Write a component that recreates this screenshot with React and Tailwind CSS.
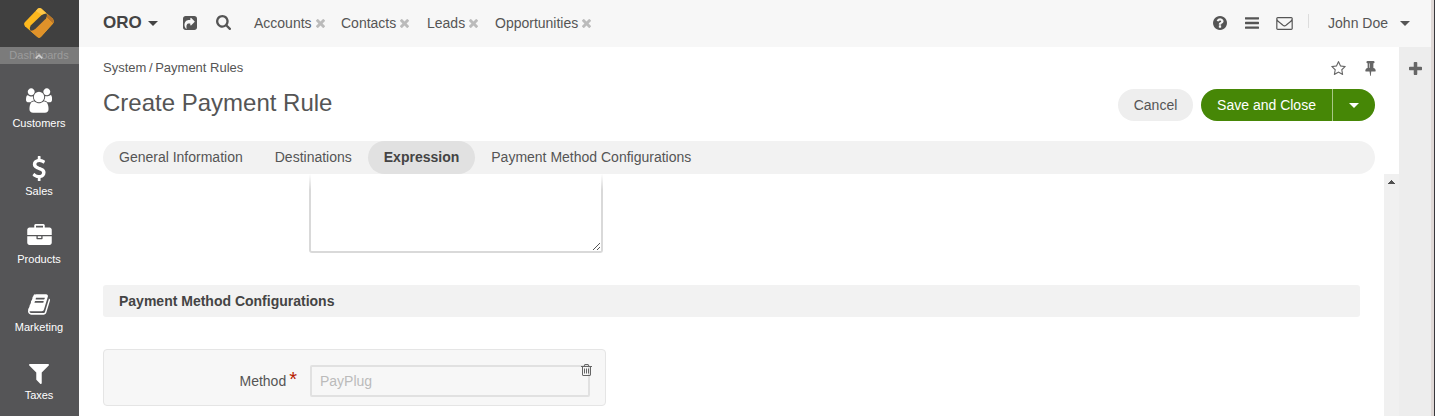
const ICONS = {
  share: ['0 128 1536 1536', 'M1280 749q0-26-19-45l-352-352q-30-31-69-14-40 17-40 59v160q-119 0-216 19.500t-162.500 51-114 79-76.500 95.500-44.500 109-21.500 111.500-5 110.500q0 181 167 404 11 12 25 12 7 0 13-3 22-9 19-33-44-354 62-473 46-52 130-75.500t224-23.500v160q0 42 40 59 12 5 24 5 26 0 45-19l352-352q19-19 19-45zm256-333v960q0 119-84.500 203.500t-203.500 84.500h-960q-119 0-203.500-84.500t-84.500-203.500v-960q0-119 84.500-203.500t203.500-84.500h960q119 0 203.500 84.500t84.500 203.500z'],
  search: ['0 0 1664 1664', 'M1152 704q0-185-131.500-316.500t-316.500-131.500-316.500 131.500-131.500 316.500 131.500 316.500 316.500 131.500 316.500-131.500 131.500-316.500zm512 832q0 52-38 90t-90 38q-54 0-90-38l-343-342q-179 124-399 124-143 0-273.500-55.500t-225-150-150-225-55.500-273.500 55.500-273.500 150-225 225-150 273.500-55.500 273.500 55.500 225 150 150 225 55.500 273.500q0 220-124 399l343 343q37 37 37 90z'],
  times: ['302 366 1188 1188', 'M1490 1322q0 40-28 68l-136 136q-28 28-68 28t-68-28l-294-294-294 294q-28 28-68 28t-68-28l-136-136q-28-28-28-68t28-68l294-294-294-294q-28-28-28-68t28-68l136-136q28-28 68-28t68 28l294 294 294-294q28-28 68-28t68 28l136 136q28 28 28 68t-28 68l-294 294 294 294q28 28 28 68z'],
  question: ['128 128 1536 1536', 'M1024 1376v-192q0-14-9-23t-23-9h-192q-14 0-23 9t-9 23v192q0 14 9 23t23 9h192q14 0 23-9t9-23zm256-672q0-88-55.500-163t-138.500-116-170-41q-243 0-371 213-15 24 8 42l132 100q7 6 19 6 16 0 25-12 53-68 86-92 34-24 86-24 48 0 85.500 26t37.500 59q0 38-20 61t-68 45q-63 28-115.500 86.500t-52.500 125.500v36q0 14 9 23t23 9h192q14 0 23-9t9-23q0-19 21.500-49.500t54.500-49.500q32-18 49-28.500t46-35 44.500-48 28-60.500 12.500-81zm384 192q0 209-103 385.500t-279.500 279.500-385.500 103-385.500-103-279.500-279.500-103-385.500 103-385.500 279.500-279.500 385.500-103 385.500 103 279.500 279.500 103 385.500z'],
  bars: ['128 256 1536 1280', 'M1664 1344v128q0 26-19 45t-45 19h-1408q-26 0-45-19t-19-45v-128q0-26 19-45t45-19h1408q26 0 45 19t19 45zm0-512v128q0 26-19 45t-45 19h-1408q-26 0-45-19t-19-45v-128q0-26 19-45t45-19h1408q26 0 45 19t19 45zm0-512v128q0 26-19 45t-45 19h-1408q-26 0-45-19t-19-45v-128q0-26 19-45t45-19h1408q26 0 45 19t19 45z'],
  envelope: ['0 256 1792 1408', 'M1664 1504v-768q-32 36-69 66-268 206-426 338-51 43-83 67t-86.500 48.500-102.500 24.500h-2q-48 0-102.500-24.500t-86.500-48.500-83-67q-158-132-426-338-37-30-69-66v768q0 13 9.500 22.500t22.500 9.500h1472q13 0 22.500-9.500t9.500-22.500zm0-1051v-24.500l-.5-13-3-12.500-5.500-9-9-7.500-14-2.500h-1472q-13 0-22.500 9.500t-9.500 22.500q0 168 147 284 193 152 401 317 6 5 35 29.500t46 37.500 44.500 31.500 50.500 27.500 43 9h2q20 0 43-9t50.500-27.500 44.500-31.500 46-37.500 35-29.500q208-165 401-317 54-43 100.500-115.500t46.500-131.500zm128-37v1088q0 66-47 113t-113 47h-1472q-66 0-113-47t-47-113v-1088q0-66 47-113t113-47h1472q66 0 113 47t47 113z'],
  star: ['64 32 1664 1587', 'M1201 1004l306-297-422-62-189-382-189 382-422 62 306 297-73 421 378-199 377 199zm527-357q0 22-26 48l-363 354 86 500q1 7 1 20 0 50-41 50-19 0-40-12l-449-236-449 236q-22 12-40 12-21 0-31.500-14.500t-10.500-35.500q0-6 2-20l86-500-364-354q-25-27-25-48 0-37 56-46l502-73 225-455q19-41 49-41t49 41l225 455 502 73q56 9 56 46z'],
  pin: ['320 128 1152 1664', 'M800 864v-448q0-14-9-23t-23-9-23 9-9 23v448q0 14 9 23t23 9 23-9 9-23zm672 352q0 26-19 45t-45 19h-429l-51 483q-2 12-10.500 20.500t-20.500 8.500h-1q-27 0-32-27l-76-485h-404q-26 0-45-19t-19-45q0-123 78.500-221.500t177.500-98.500v-512q-52 0-90-38t-38-90 38-90 90-38h640q52 0 90 38t38 90-38 90-90 38v512q99 0 177.500 98.500t78.500 221.500z'],
  plus: ['192 128 1408 1408', 'M1600 736v192q0 40-28 68t-68 28h-416v416q0 40-28 68t-68 28h-192q-40 0-68-28t-28-68v-416h-416q-40 0-68-28t-28-68v-192q0-40 28-68t68-28h416v-416q0-40 28-68t68-28h192q40 0 68 28t28 68v416h416q40 0 68 28t28 68z'],
  users: ['64 0 1920 1792', 'M657 896q-162 5-265 128h-134q-82 0-138-40.500t-56-118.500q0-353 124-353 6 0 43.500 21t97.500 42.500 119 21.500q67 0 133-23-5 37-5 66 0 159 93 269zm1071 637q0 120-73 189.500t-194 69.500h-874q-121 0-194-69.500t-73-189.500q0-53 3.500-103.500t14-109 26.500-108.500 43-97.500 62-81 85.500-53.500 111.500-20q10 0 43 21.500t73 48 107 48 135 21.500 135-21.500 107-48 73-48 43-21.500q61 0 111.500 20t85.500 53.500 62 81 43 97.500 26.500 108.500 14 109 3.500 103.500zm-1024-1277q0 106-75 181t-181 75-181-75-75-181 75-181 181-75 181 75 75 181zm704 384q0 159-112.500 271.500t-271.500 112.500-271.500-112.500-112.500-271.500 112.500-271.500 271.500-112.500 271.500 112.500 112.500 271.500zm576 225q0 78-56 118.500t-138 40.500h-134q-103-123-265-128 93-110 93-269 0-29-5-66 66 23 133 23 59 0 119-21.500t97.500-42.500 43.500-21q124 0 124 353zm-128-609q0 106-75 181t-181 75-181-75-75-181 75-181 181-75 181 75 75 181z'],
  dollar: ['424 0 938 1792', 'M1362 1185q0 153-99.500 263.500t-258.500 136.500v175q0 14-9 23t-23 9h-135q-13 0-22.500-9.500t-9.500-22.500v-175q-66-9-127.500-31t-101.500-44.500-74-48-46.500-37.500-17.500-18q-17-21-2-41l103-135q7-10 23-12 15-2 24 9l2 2q113 99 243 125 37 8 74 8 81 0 142.500-43t61.500-122q0-28-15-53t-33.500-42-58.500-37.500-66-32-80-32.500q-39-16-61.500-25t-61.500-26.500-62.500-31-56.500-35.500-53.500-42.500-43.500-49-35.500-58-21-66.500-8.500-78q0-138 98-242t255-134v-180q0-13 9.500-22.500t22.500-9.500h135q14 0 23 9t9 23v176q57 6 110.500 23t87 33.500 63.500 37.500 39 29 15 14q17 18 5 38l-81 146q-8 15-23 16-14 3-27-7-3-3-14.500-12t-39-26.500-58.500-32-74.500-26-85.500-11.500q-95 0-155 43t-60 111q0 26 8.500 48t29.500 41.500 39.500 33 56 31 60.500 27 70 27.500q53 20 81 31.500t76 35 75.500 42.500 62 50 53 63.500 31.500 76.500 13 94z'],
  briefcase: ['0 0 1792 1536', 'M640 256h512v-128h-512v128zm1152 640v480q0 66-47 113t-113 47h-1472q-66 0-113-47t-47-113v-480h672v160q0 26 19 45t45 19h320q26 0 45-19t19-45v-160h672zm-768 0v128h-256v-128h256zm768-480v384h-1792v-384q0-66 47-113t113-47h352v-160q0-40 28-68t68-28h576q40 0 68 28t28 68v160h352q66 0 113 47t47 113z'],
  book: ['64 128 1664 1536', 'M1703 478q40 57 18 129l-275 906q-19 64-76.500 107.500t-122.500 43.500h-923q-77 0-148.500-53.500t-99.500-131.500q-24-67-2-127 0-4 3-27t4-37q1-8-3-21.500t-3-19.500q2-11 8-21t16.500-23.500 16.500-23.500q23-38 45-91.500t30-91.500q3-10 .5-30t-.5-28q3-11 17-28t17-23q21-36 42-92t25-90q1-9-2.500-32t.5-28q4-13 22-30.500t22-22.500q19-26 42.500-84.500t27.500-96.500q1-8-3-25.500t-2-26.500q2-8 9-18t18-23 17-21q8-12 16.500-30.500t15-35 16-36 19.500-32 26.500-23.500 36-11.500 47.500 5.500l-1 3q38-9 51-9h761q74 0 114 56t18 130l-274 906q-36 119-71.500 153.500t-128.500 34.500h-869q-27 0-38 15-11 16-1 43 24 70 144 70h923q29 0 56-15.500t35-41.500l300-987q7-22 5-57 38 15 59 43zm-1064 2q-4 13 2 22.500t20 9.500h608q13 0 25.500-9.500t16.500-22.500l21-64q4-13-2-22.500t-20-9.500h-608q-13 0-25.500 9.500t-16.500 22.500zm-83 256q-4 13 2 22.500t20 9.500h608q13 0 25.500-9.500t16.500-22.500l21-64q4-13-2-22.500t-20-9.500h-608q-13 0-25.500 9.500t-16.500 22.500z'],
  filter: ['192 256 1408 1408', 'M1595 295q17 41-14 70l-493 493v742q0 42-39 59-13 5-25 5-27 0-45-19l-256-256q-19-19-19-45v-486l-493-493q-31-29-14-70 17-39 59-39h1280q42 0 59 39z'],
  trash: ['192 128 1408 1536', 'M704 736v576q0 14-9 23t-23 9h-64q-14 0-23-9t-9-23v-576q0-14 9-23t23-9h64q14 0 23 9t9 23zm256 0v576q0 14-9 23t-23 9h-64q-14 0-23-9t-9-23v-576q0-14 9-23t23-9h64q14 0 23 9t9 23zm256 0v576q0 14-9 23t-23 9h-64q-14 0-23-9t-9-23v-576q0-14 9-23t23-9h64q14 0 23 9t9 23zm128 724v-948h-896v948q0 22 7 40.500t14.500 27 10.500 8.500h832q3 0 10.500-8.500t14.500-27 7-40.500zm-672-1076h448l-48-117q-7-9-17-11h-317q-10 2-17 11zm928 32v64q0 14-9 23t-23 9h-96v948q0 83-47 143.500t-113 60.500h-832q-66 0-113-58.500t-47-141.500v-952h-96q-14 0-23-9t-9-23v-64q0-14 9-23t23-9h309l70-167q15-37 54-63t79-26h320q40 0 79 26t54 63l70 167h309q14 0 23 9t9 23z'],
  caret: ['0 0 10 5', 'M0 0h10l-5 5z'],
};

function Icon({ name, className }) {
  const [viewBox, d] = ICONS[name];
  return (
    <svg viewBox={viewBox} className={`block shrink-0 fill-current ${className}`} aria-hidden="true">
      <path d={d} />
    </svg>
  );
}

function Logo() {
  return (
    <svg viewBox="0 0 30 30" className="block h-[30px] w-[30px]" aria-hidden="true">
      <path d="M14 .6q1.600-1.200 3.200 0L28.600 10.600q2.200 2.600.4 5L16.800 29q-1.700 1.300-3.400 0L1 18.200q-1.700-2-.2-4z" fill="#fdb81e" />
      <path d="M14 .6q1.600-1.200 3.200 0l5.400 4.900-4.800 1.300-6-3.700z" fill="#fec748" />
      <path d="M22.600 5.500l6 5.100q2.200 2.600.4 5l-6.300-5.800z" fill="#b8742a" />
      <path d="M22.700 9.800L29 15.600 16.800 29q-1.700 1.300-3.400 0L6 22.400z" fill="#e0922a" />
      <path d="M17.400 7.200q2.600-1.700 5.200-1.700 1 3-.6 5L11.500 20.800Q9 22.900 6.300 22.600q-1.300-2.600.4-5z" fill="#404040" />
    </svg>
  );
}

const MENU = [
  { label: 'Customers', icon: 'users', size: 'h-[25px] w-[26px] -mb-px' },
  { label: 'Sales', icon: 'dollar', size: 'h-[25px] w-[14px] -mb-px' },
  { label: 'Products', icon: 'briefcase', size: 'h-[21px] w-[25px] mb-[3px]' },
  { label: 'Marketing', icon: 'book', size: 'h-[21px] w-[22px] mb-px' },
  { label: 'Taxes', icon: 'filter', size: 'h-5 w-5' },
];

function Sidebar() {
  return (
    <aside className="flex w-[79px] shrink-0 flex-col bg-[#555557] text-white">
      <div className="flex h-[47px] shrink-0 justify-center bg-[#404040] pr-px pt-2">
        <Logo />
      </div>
      <div className="relative h-[17px] shrink-0 bg-[#7b7b7b] pr-px text-center text-[11px] leading-[17px] text-[#9c9c9c]">
        Dashboards
        <svg viewBox="0 0 8 5" className="absolute left-[35px] top-[7px] h-[5px] w-2" aria-hidden="true">
          <path d="M.7 4.400L4 1.100l3.300 3.300" fill="none" stroke="#d0d0d0" strokeWidth="1.500" />
        </svg>
      </div>
      <nav className="flex flex-col pr-px">
        {MENU.map((item) => (
          <a key={item.label} className="flex h-[68px] flex-col items-center">
            <span className="flex h-12 items-end">
              <Icon name={item.icon} className={item.size} />
            </span>
            <span className="mt-[3px] text-[11px] leading-4">{item.label}</span>
          </a>
        ))}
      </nav>
    </aside>
  );
}

const SHORTCUTS = [
  { name: 'Accounts', width: 'w-[87px]' },
  { name: 'Contacts', width: 'w-[86px]' },
  { name: 'Leads', width: 'w-[68px]' },
  { name: 'Opportunities', width: 'w-[97px]' },
];

function TopBar() {
  return (
    <header className="flex h-[47px] shrink-0 items-center bg-[#f7f7f7] pl-6 pr-[21px] text-sm text-[#555]">
      <span className="w-[39px] text-[17px] font-bold leading-5 text-[#444] -mt-[2px]">ORO</span>
      <Icon name="caret" className="ml-[6px] h-[5px] w-[10px] text-[#444]" />
      <Icon name="share" className="ml-[25px] -mt-[2px] h-[14px] w-[14px]" />
      <Icon name="search" className="ml-[19px] -mt-[2px] h-[15px] w-[15px]" />
      <div className="-mt-[2px] ml-[23px] flex">
        {SHORTCUTS.map(({ name, width }) => (
          <span key={name} className={`flex items-center text-[14px] leading-5 ${width}`}>
            {name}
            <Icon name="times" className="ml-1 mt-px h-[9px] w-[9px] text-[#bbb]" />
          </span>
        ))}
      </div>
      <Icon name="question" className="ml-auto -mt-px h-[14px] w-[14px]" />
      <Icon name="bars" className="ml-[18px] -mt-px h-[12px] w-[14px]" />
      <Icon name="envelope" className="ml-[17px] -mt-px h-[13px] w-[17px]" />
      <span className="ml-[15px] -mt-[5px] h-[14px] w-px bg-[#ddd]" />
      <span className="-mt-[2px] ml-[19px]">John Doe</span>
      <Icon name="caret" className="ml-[12px] h-[5px] w-[10px]" />
    </header>
  );
}

function PageHeader() {
  return (
    <div className="flex h-[94px] shrink-0 justify-between pl-6 pr-6">
      <div>
        <div className="mt-3 text-[13px] leading-[18px] text-[#555]">System&thinsp;/&thinsp;Payment Rules</div>
        <h1 className="mt-3 text-2xl leading-[28px] text-[#555]">Create Payment Rule</h1>
      </div>
      <div className="flex flex-col items-end text-[#666]">
        <div className="flex h-[42px] items-center">
          <Icon name="star" className="h-[14px] w-[15px]" />
          <Icon name="pin" className="ml-[19px] mr-[-1px] h-[15px] w-[11px]" />
        </div>
        <div className="flex h-8 gap-2 text-sm">
          <button className="w-[75px] rounded-full bg-[#eee] text-[#555]">Cancel</button>
          <div className="flex rounded-full bg-[#468706] text-white">
            <button className="w-[131px]">Save and Close</button>
            <button className="flex w-[43px] items-center justify-center border-l border-[#a9c888]">
              <Icon name="caret" className="h-[5px] w-[10px]" />
            </button>
          </div>
        </div>
      </div>
    </div>
  );
}

function Tabs() {
  return (
    <nav className="mx-6 flex h-[33px] shrink-0 rounded-full bg-[#f2f2f2] text-sm leading-8 text-[#555]">
      <span className="px-4">General Information</span>
      <span className="px-4">Destinations</span>
      <span className="rounded-full bg-[#e1e1e1] px-4 font-bold text-[#444]">Expression</span>
      <span className="px-4">Payment Method Configurations</span>
    </nav>
  );
}

function FormBody() {
  return (
    <div className="flex min-h-0 grow">
      <div className="grow overflow-hidden pl-6 pr-6">
        <div className="relative ml-[206px] h-[79px] w-[294px] rounded-b-[3px] border-2 border-t-0 border-[#d9d9d9]">
          <div className="absolute -inset-x-[2px] top-0 h-4 bg-linear-to-b from-white to-white/0" />
          <svg viewBox="0 0 8 8" className="absolute bottom-px right-0 h-2 w-2" shapeRendering="crispEdges" aria-hidden="true">
            <path d="M0 7h1v1H0zM1 6h1v1H1zM2 5h1v1H2zM3 4h1v1H3zM4 3h1v1H4zM5 2h1v1H5zM6 1h1v1H6zM4 7h1v1H4zM5 6h1v1H5zM6 5h1v1H6z" fill="#555" />
          </svg>
        </div>
        <h2 className="mt-8 h-8 rounded-[3px] bg-[#f2f2f2] px-4 text-sm font-bold leading-8 text-[#444]">
          Payment Method Configurations
        </h2>
        <div className="mt-8 flex h-[57px] w-[503px] rounded-[4px] border border-[#e5e5e5] bg-[#f7f7f7] pt-[15px] text-sm text-[#555]">
          <div className="flex w-[193px] justify-end leading-8">
            Method
            <span className="ml-[3px] -mt-[2px] text-[20px] leading-8 text-[#b81c00]">*</span>
          </div>
          <div className="relative ml-[13px] h-8 w-[280px] rounded-[2px] border-2 border-[#e1e1e1] px-2 leading-7 text-[#bbb]">
            PayPlug
            <Icon name="trash" className="absolute -right-[4px] -top-[3px] h-[12px] w-[11px] text-[#666]" />
          </div>
        </div>
      </div>
      <div className="flex w-[15px] shrink-0 justify-center bg-[#f0f0f0] pt-[6px]">
        <svg viewBox="0 0 7 4" className="block h-1 w-[7px]" shapeRendering="crispEdges" aria-hidden="true">
          <path d="M3 0h1v1h1v1h1v1h1v1H0V3h1V2h1V1h1z" fill="#505050" />
        </svg>
      </div>
    </div>
  );
}

export default function App() {
  return (
    <div className="flex h-[416px] w-[1435px] overflow-hidden bg-white font-['Liberation_Sans',Arial,sans-serif]">
      <Sidebar />
      <div className="flex grow flex-col">
        <TopBar />
        <div className="flex min-h-0 grow">
          <main className="flex grow flex-col">
            <PageHeader />
            <Tabs />
            <FormBody />
          </main>
          <aside className="flex w-8 shrink-0 justify-center bg-[#ededed] pt-[15px] text-[#666]">
            <Icon name="plus" className="h-[13px] w-[13px]" />
          </aside>
        </div>
      </div>
      <div className="w-1 shrink-0 border-r border-[#38383c] bg-[#dfd8d6]" />
    </div>
  );
}
